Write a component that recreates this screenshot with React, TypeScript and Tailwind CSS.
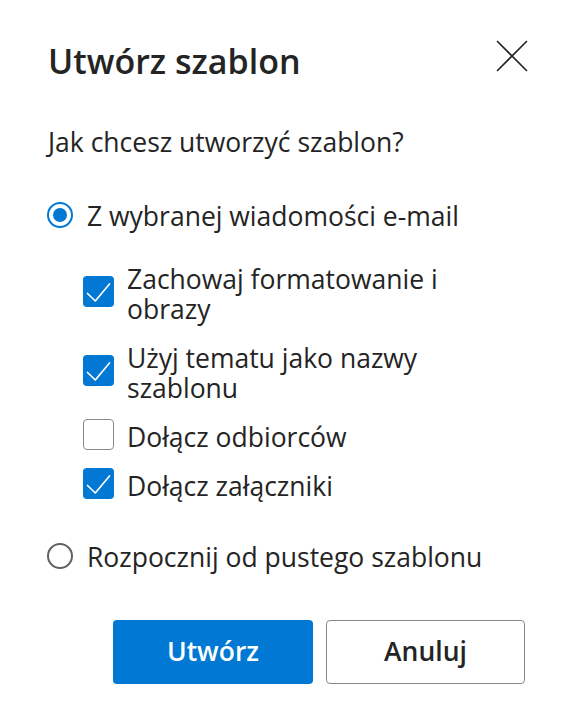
import React from "react";

const font = { fontFamily: '"Open Sans", "Noto Sans", sans-serif' };

function Check() {
  return (
    <span className="flex h-[31px] w-[31px] shrink-0 items-center justify-center rounded-[4px] bg-[#0078d4]">
      <svg width="31" height="31" viewBox="0 0 31 31" fill="none">
        <path d="M4.5 17.5 L12.3 25 L26.5 8" stroke="white" strokeWidth="1.7" strokeLinecap="round" strokeLinejoin="round" />
      </svg>
    </span>
  );
}

function Unchecked() {
  return <span className="block h-[31px] w-[31px] shrink-0 rounded-[4px] border border-[#8a8a8a] bg-white" />;
}

function CheckRow({ checked, children }: { checked: boolean; children: React.ReactNode }) {
  return (
    <div className="flex items-center gap-[13px]">
      {checked ? <Check /> : <Unchecked />}
      <div className="mt-[5px] text-[26.5px] leading-[30px] text-[#242424]">{children}</div>
    </div>
  );
}

export default function App() {
  return (
    <div className="h-[728px] w-[570px] bg-white text-[#242424]" style={font}>
      <div className="flex items-start justify-between pl-[48px] pr-[42px] pt-[39px]">
        <h1 className="text-[34px] font-semibold leading-[44px]">Utwórz szablon</h1>
        <button className="mt-[1px] h-[32px] w-[32px]">
          <svg width="32" height="32" viewBox="0 0 32 32" fill="none">
            <path d="M1 1 L31 31 M31 1 L1 31" stroke="#242424" strokeWidth="1.6" />
          </svg>
        </button>
      </div>
      <div className="px-[47px] pt-[43px]">
        <p className="pl-[1px] text-[26.5px] leading-[32px]">Jak chcesz utworzyć szablon?</p>
        <div className="mt-[40px] flex items-center gap-[14px]">
          <span className="flex h-[26px] w-[26px] items-center justify-center rounded-full border-2 border-[#0078d4]">
            <span className="h-[14px] w-[14px] rounded-full bg-[#0078d4]" />
          </span>
          <span className="mt-[2px] text-[26.5px] leading-[32px]">Z wybranej wiadomości e-mail</span>
        </div>
        <div className="mt-[27px] flex flex-col gap-[14px] pl-[36px]">
          <CheckRow checked>Zachowaj formatowanie i<br />obrazy</CheckRow>
          <CheckRow checked>Użyj tematu jako nazwy<br />szablonu</CheckRow>
          <CheckRow checked={false}>Dołącz odbiorców</CheckRow>
          <CheckRow checked>Dołącz załączniki</CheckRow>
        </div>
        <div className="mt-[38px] flex items-center gap-[14px]">
          <span className="h-[26px] w-[26px] rounded-full border-2 border-[#616161]" />
          <span className="mt-[2px] text-[26.5px] leading-[32px]">Rozpocznij od pustego szablonu</span>
        </div>
      </div>
      <div className="mt-[47px] flex justify-end gap-[13px] pr-[45px]">
        <button className="h-[64px] w-[200px] rounded-[4px] bg-[#0078d4] text-[26.5px] font-semibold text-white">Utwórz</button>
        <button className="h-[64px] w-[199px] rounded-[4px] border border-[#8a8886] bg-white text-[26.5px] font-semibold text-[#242424]">Anuluj</button>
      </div>
    </div>
  );
}
